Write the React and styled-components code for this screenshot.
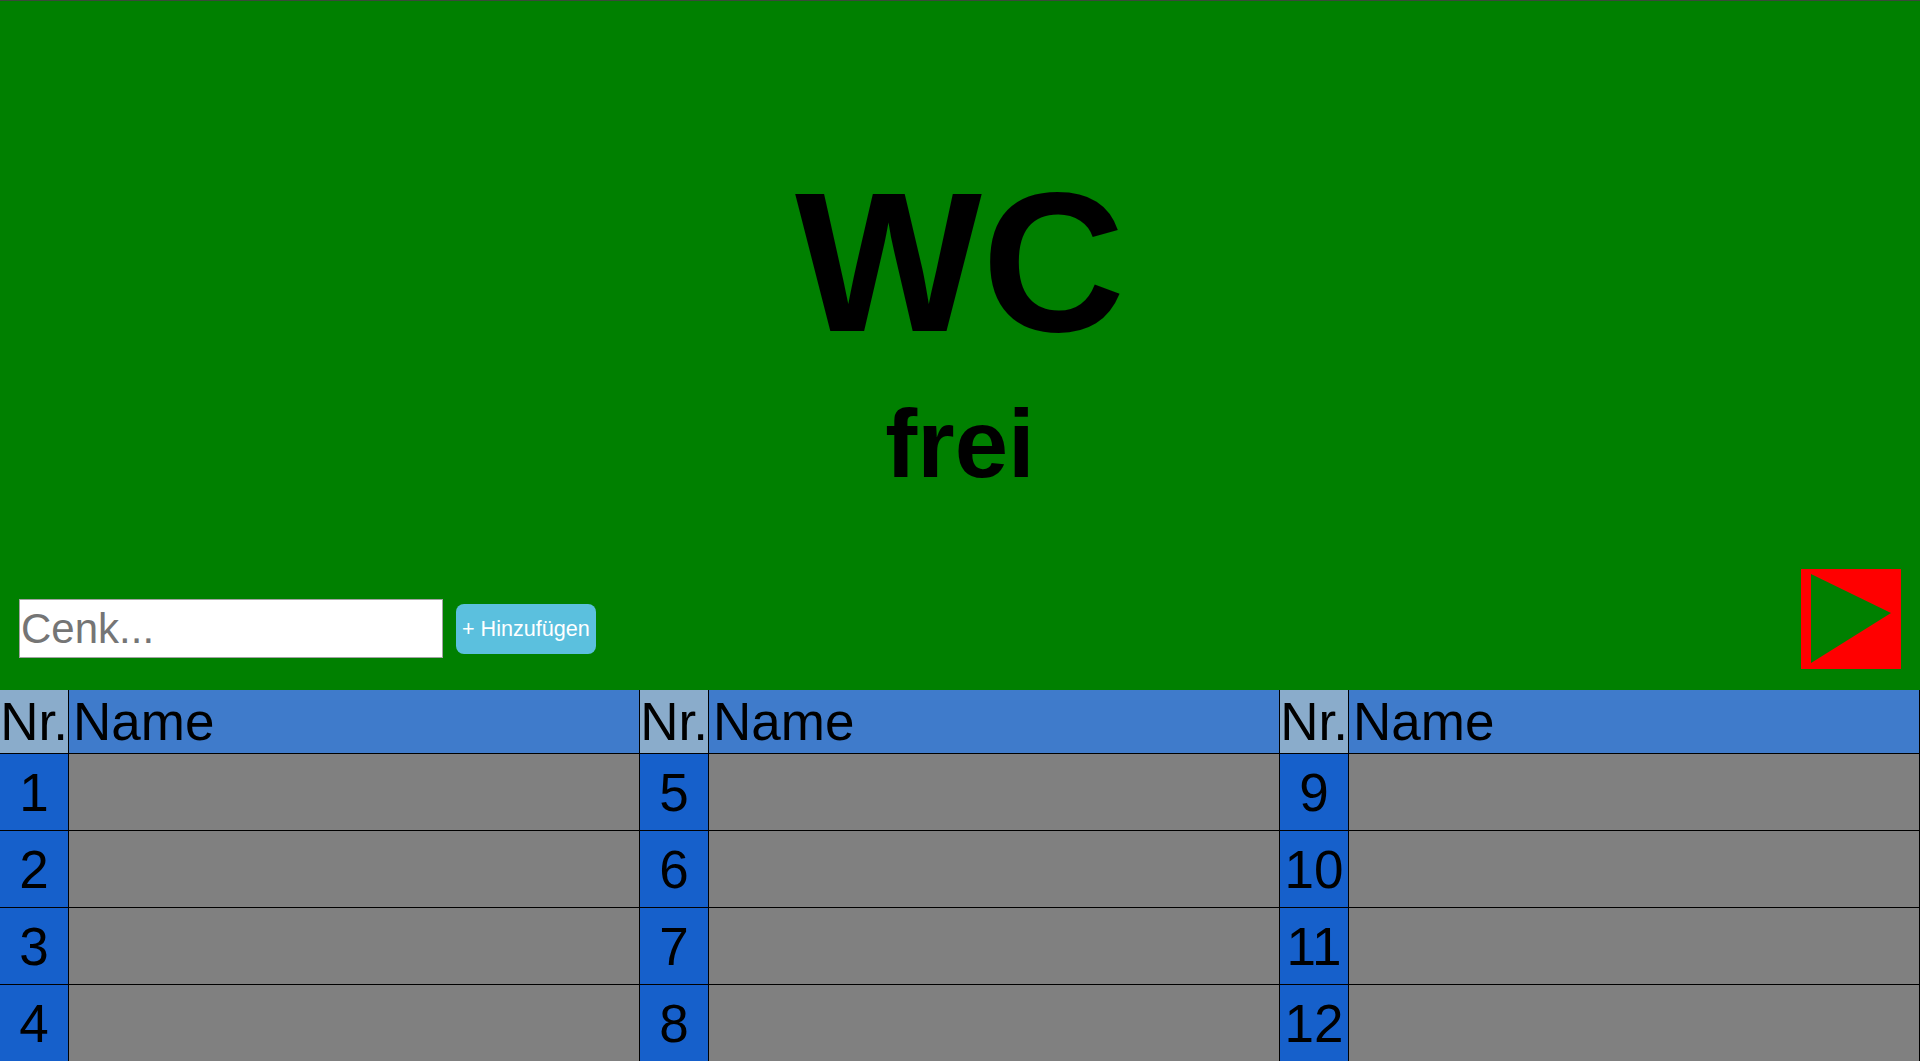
import styled, { createGlobalStyle } from 'styled-components';

const GlobalStyle = createGlobalStyle`
  html, body { margin: 0; padding: 0; overflow: hidden; }
  body { font-family: "Liberation Sans", Arial, sans-serif; background: #fff; }
`;

const Hero = styled.header`
  height: 689px;
  background: #008000;
  border-top: 1px solid #3a4a3a;
  display: flex;
  flex-direction: column;
  align-items: center;
`;

const Title = styled.h1`
  margin: 148px 0 0;
  font-size: 198px;
  line-height: normal;
  font-weight: bold;
  color: #000;
`;

const Status = styled.h2`
  margin: 13px 0 0;
  font-size: 96px;
  line-height: normal;
  font-weight: bold;
  color: #000;
`;

const Controls = styled.div`
  align-self: stretch;
  margin-top: auto;
  padding: 0 19px 21px;
  display: flex;
  align-items: flex-end;
  justify-content: space-between;
`;

const AddForm = styled.form`
  display: flex;
  align-items: center;
  gap: 13px;
  margin: 0 0 11px;
`;

const NameInput = styled.input`
  box-sizing: border-box;
  width: 424px;
  height: 59px;
  padding: 0 1px;
  border: 1px solid #a3a3a3;
  font-family: "Liberation Sans", Arial, sans-serif;
  font-size: 42px;
  color: #000;
  background: #fff;
  outline: none;
  &::placeholder { color: #757575; }
`;

const AddButton = styled.button`
  height: 50px;
  padding: 0 6px;
  border: none;
  border-radius: 8px;
  background: #5bc0de;
  color: #fff;
  font-family: "Liberation Sans", Arial, sans-serif;
  font-size: 21.6px;
  cursor: pointer;
`;

const PlayButton = styled.button`
  width: 100px;
  height: 100px;
  padding: 0;
  border: none;
  background: #ff0000;
  display: block;
  cursor: pointer;
  svg { display: block; }
`;

const Tables = styled.section`
  display: grid;
  grid-template-columns: repeat(3, 1fr);
`;

const Table = styled.table`
  width: 100%;
  border-collapse: collapse;
  table-layout: fixed;
  font-size: 53px;
  color: #000;
`;

const Head = styled.th`
  height: 63px;
  padding: 0;
  font-weight: normal;
  white-space: nowrap;
  border-bottom: 1px solid #000;
  border-right: 1px solid #000;
  background: ${p => (p.$nr ? '#8aaccb' : '#3f7bcb')};
  text-align: ${p => (p.$nr ? 'center' : 'left')};
  padding-left: ${p => (p.$nr ? '0' : '4px')};
  width: ${p => (p.$nr ? '68px' : 'auto')};
`;

const Cell = styled.td`
  height: 76px;
  padding: 0;
  border-bottom: 1px solid #000;
  border-right: 1px solid #000;
  background: ${p => (p.$nr ? '#1660cb' : '#808080')};
  text-align: ${p => (p.$nr ? 'center' : 'left')};
  padding-left: ${p => (p.$nr ? '0' : '4px')};
  white-space: nowrap;
`;

const slots = Array.from({ length: 12 }, (_, i) => ({ nr: i + 1, name: '' }));

function QueueTable({ rows }) {
  return (
    <Table>
      <thead>
        <tr>
          <Head $nr>Nr.</Head>
          <Head>Name</Head>
        </tr>
      </thead>
      <tbody>
        {rows.map(r => (
          <tr key={r.nr}>
            <Cell $nr>{r.nr}</Cell>
            <Cell>{r.name}</Cell>
          </tr>
        ))}
      </tbody>
    </Table>
  );
}

export default function App() {
  return (
    <>
      <GlobalStyle />
      <Hero>
        <Title>WC</Title>
        <Status>frei</Status>
        <Controls>
          <AddForm onSubmit={e => e.preventDefault()}>
            <NameInput placeholder="Cenk..." />
            <AddButton type="submit">+ Hinzufügen</AddButton>
          </AddForm>
          <PlayButton aria-label="Start">
            <svg width="100" height="100" viewBox="0 0 100 100">
              <polygon points="10,5 10,94 90,44" fill="#008000" />
            </svg>
          </PlayButton>
        </Controls>
      </Hero>
      <Tables>
        <QueueTable rows={slots.slice(0, 4)} />
        <QueueTable rows={slots.slice(4, 8)} />
        <QueueTable rows={slots.slice(8, 12)} />
      </Tables>
    </>
  );
}
